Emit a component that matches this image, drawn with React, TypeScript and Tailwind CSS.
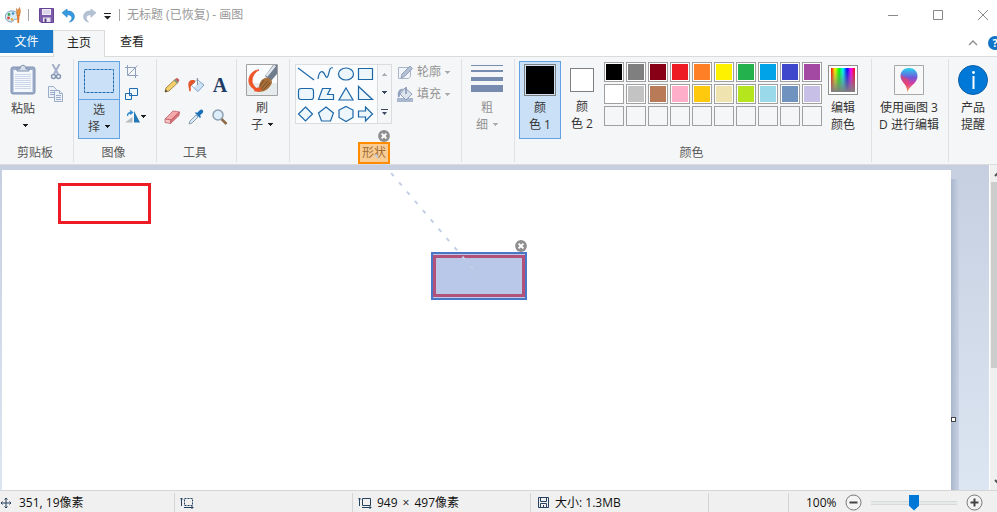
import React from "react";

const ROW_ONE = ["bg-[#000000]", "bg-[#7f7f7f]", "bg-[#880015]", "bg-[#ed1c24]", "bg-[#ff7f27]", "bg-[#fff200]", "bg-[#22b14c]", "bg-[#00a2e8]", "bg-[#3f48cc]", "bg-[#a349a4]"];
const ROW_TWO = ["bg-[#ffffff]", "bg-[#c3c3c3]", "bg-[#b97a57]", "bg-[#ffaec9]", "bg-[#ffc90e]", "bg-[#efe4b0]", "bg-[#b5e61d]", "bg-[#99d9ea]", "bg-[#7092be]", "bg-[#c8bfe7]"];
const ROW_THREE = Array.from({ length: 10 }, () => "");

function Caret({ className = "fill-[#1e1e1e]" }: { className?: string }) {
  return (
    <svg className={"shrink-0 " + className} width="5" height="3" viewBox="0 0 5 3" shapeRendering="crispEdges">
      <path d="M0 0h5v1H4v1H3v1H2V2H1V1H0z" />
    </svg>
  );
}

function Group({ label, width, last = false, highlight = false, children }: {
  label?: string; width: string; last?: boolean; highlight?: boolean; children: React.ReactNode;
}) {
  return (
    <section aria-label={label} className={"flex shrink-0 flex-col justify-between gap-[5px] " + width + (last ? "" : " border-r border-[#dfe1e5]")}>
      <div className="flex pt-[2px]">{children}</div>
      {label && (
        <div className="pr-[3px] text-center leading-[18px] text-[#5a5a5a]">
          {highlight ? (
            <span className="relative inline-block">
              {label}
              <span className="absolute -inset-x-1 -inset-y-[2px] border-2 border-[#ff8c00] bg-[#ff8c00]/40" />
            </span>
          ) : label}
        </div>
      )}
    </section>
  );
}

function Swatch({ color }: { color: string }) {
  return (
    <button aria-label="颜色" className={"size-5 border border-[#a0a0a0] p-px " + (color ? "bg-white" : "bg-[#f5f6f7]")}>
      <span className={"block size-full " + color} />
    </button>
  );
}

function TwoLine({ first, second, caret = "" }: { first: string; second: string; caret?: string }) {
  return (
    <span className="flex flex-col items-center pt-px leading-[17px]">
      <span>{first}</span>
      <span className="flex items-center gap-[5px]">{second}{caret && <Caret className={caret} />}</span>
    </span>
  );
}

function CloseBadge({ className }: { className: string }) {
  return (
    <button aria-label="删除标注" className={"absolute " + className}>
      <svg className="block" width="12" height="12" viewBox="0 0 12 12">
        <circle cx="6" cy="6" r="5.900" fill="#8f8f8f" />
        <path d="M3.600 3.600l4.800 4.800M8.400 3.600L3.600 8.400" stroke="#fff" strokeWidth="2" />
      </svg>
    </button>
  );
}

function TitleBar() {
  return (
    <header className="flex h-[30px] shrink-0 items-center text-[#999]">
      <svg className="ml-[5px]" width="16" height="17" viewBox="0 0 16 17">
        <path d="M8 4C3.500 3.500.5 6 .5 9.500S3 15 6.500 15c2 0 1.500-2 3-2.500 1.500-.5 3 .5 3.500-1.500C14 7 11.500 4.300 8 4z" fill="#d8eaf6" stroke="#6f9fc0" />
        <circle cx="4" cy="7.500" r="1.400" fill="#3fa354" /><circle cx="8" cy="6.500" r="1.300" fill="#3b8fd0" />
        <circle cx="3.500" cy="11" r="1.400" fill="#d94a38" /><circle cx="7" cy="12.500" r="1.300" fill="#e8a32a" />
        <path d="M12 8l.5 8h1.500l.5-8z" fill="#e87524" /><path d="M11.500 1.500l1.500 2 1.500-3 1 3.500-.8 4.500h-2.800z" fill="#e9953c" stroke="#b9642b" strokeWidth=".5" />
      </svg>
      <span className="ml-[7px] h-3 w-px bg-[#a5a5a5]" />
      <button aria-label="保存" className="ml-[10px]">
        <svg className="block" width="15" height="15" viewBox="0 0 15 15">
          <path d="M.5.5h14v14H2L.5 13z" fill="#7c5bab" stroke="#644594" />
          <path d="M3 1h9v6H3z" fill="#f0ebf7" /><path d="M4 3h7M4 5h7" stroke="#c9bedb" />
          <path d="M4 9.500h7.500V14H4z" fill="#e8e3ee" /><path d="M5.500 10.500h2V14h-2z" fill="#5a4380" />
        </svg>
      </button>
      <button aria-label="撤消" className="ml-2">
        <svg className="block" width="13" height="15" viewBox="0 0 14 15">
          <path d="M0 4.500L5.500.500v2.300C10 2.500 13.500 4.500 13.300 9c-.1 3-2.300 5-5.300 5.500 2-1.500 3-3 2.500-5C10 7.500 8 6.500 5.500 6.700V9.500z" fill="#369be0" stroke="#1978bd" strokeWidth=".6" />
        </svg>
      </button>
      <button aria-label="重做" className="ml-2">
        <svg className="block" width="13" height="15" viewBox="0 0 14 15">
          <path d="M14 4.500L8.500.500v2.300C4 2.500.5 4.500.7 9c.1 3 2.300 5 5.300 5.500-2-1.500-3-3-2.500-5C4 7.500 6 6.500 8.500 6.700V9.500z" fill="#b5c2d4" stroke="#9caec4" strokeWidth=".6" />
        </svg>
      </button>
      <button aria-label="自定义快速访问工具栏" className="ml-2">
        <svg className="mt-[2px] block" width="7" height="7" viewBox="0 0 7 7"><path d="M0 0h7v1H0zM0 3h7L3.500 6.500z" fill="#222" /></svg>
      </button>
      <span className="ml-2 h-3 w-px bg-[#a5a5a5]" />
      <h1 className="ml-[7px]">无标题 (已恢复) - 画图</h1>
      <div className="ml-auto flex items-center gap-[35px] pr-[9px]">
        <button aria-label="最小化"><svg className="block" width="10" height="10"><path d="M0 5.500h10" stroke="#888" /></svg></button>
        <button aria-label="最大化"><svg className="block" width="10" height="10"><path d="M.5.5h9v9h-9z" fill="none" stroke="#888" /></svg></button>
        <button aria-label="关闭"><svg className="block" width="10" height="10"><path d="M0 0l10 10M10 0L0 10" stroke="#888" /></svg></button>
      </div>
    </header>
  );
}

function Tabs() {
  return (
    <nav className="flex h-[26px] shrink-0 overflow-x-clip text-[#222]">
      <button className="h-[23px] w-[53px] bg-[#1979ca] text-white">文件</button>
      <button className="relative z-10 h-[27px] w-[52px] border border-b-0 border-[#dadbdc] bg-[#f5f6f7] pb-[2px]">主页</button>
      <button className="h-6 w-[54px]">查看</button>
      <div className="ml-auto flex items-center gap-[10px]">
        <button aria-label="最小化功能区"><svg className="block" width="10" height="6"><path d="M1 5l4-4 4 4" fill="none" stroke="#8e8e8e" strokeWidth="1.300" /></svg></button>
        <button aria-label="帮助" className="-mr-[5px] size-[14px] rounded-full bg-[#0f73c8] text-center text-[11px] leading-[14px] font-bold text-white">?</button>
      </div>
    </nav>
  );
}

function Clipboard() {
  return (
    <Group label="剪贴板" width="w-[74px]">
      <button className="flex w-[46px] flex-col items-center gap-[5px] pt-[3px] text-[#444]">
        <svg width="26" height="31" viewBox="0 0 26 31">
          <rect x="1" y="3" width="24" height="27" rx="2" fill="#9bacc9" stroke="#8193b4" />
          <path d="M3.500 6h19v22h-19z" fill="#f4f7fc" />
          <path d="M5 10.500h16M5 12.500h16M5 14.500h16M5 16.500h16M5 18.500h16M5 20.500h16M5 22.500h16M5 24.500h16" stroke="#cbd7e8" />
          <path d="M7 7V5h3c0-5 6-5 6 0h3v2z" fill="#d6deea" stroke="#7d90ae" />
        </svg>
        <span className="flex flex-col items-center gap-[6px] leading-[18px]">粘贴<span className="pl-[5px]"><Caret className="block fill-[#1e1e1e]" /></span></span>
      </button>
      <div className="flex flex-col items-center gap-[6px] pt-[3px] pl-px">
        <button aria-label="剪切">
          <svg className="block" width="18" height="16" viewBox="0 0 18 16" fill="none">
            <path d="M5.500 0l5.500 10M12.500 0L7 10" stroke="#a3b2ca" strokeWidth="2" />
            <circle cx="6.500" cy="12.500" r="2" stroke="#8495b3" strokeWidth="1.400" /><circle cx="11.500" cy="12.500" r="2" stroke="#8495b3" strokeWidth="1.400" />
          </svg>
        </button>
        <button aria-label="复制">
          <svg className="block" width="16" height="16" viewBox="0 0 16 16" stroke="#9badc8" fill="#eef2f8">
            <path d="M.5.5h5l3 3v8h-8z" /><path d="M2 4.500h4M2 6.500h4M2 8.500h4" />
            <path d="M6.500 4.500h5l3 3v8h-8z" /><path d="M11.500 4.500v3h3M8 9.500h5M8 11.500h5M8 13.500h5" />
          </svg>
        </button>
      </div>
    </Group>
  );
}

function ImageGroup() {
  return (
    <Group label="图像" width="w-[83px]">
      <button className="ml-1 flex h-[78px] w-[42px] flex-col border border-[#62a2e4] bg-[#c9e0f7]">
        <span className="flex h-[38px] w-full items-center justify-center border-b border-[#62a2e4]">
          <svg width="30" height="24"><rect x=".5" y=".5" width="29" height="23" fill="none" stroke="#1d6bb0" strokeDasharray="3 1" /></svg>
        </span>
        <span className="w-full text-[#444]"><TwoLine first="选" second="择" caret="fill-[#1e1e1e]" /></span>
      </button>
      <div className="flex flex-col gap-[10px] pt-[4px] pl-[5px]">
        <button aria-label="裁剪">
          <svg className="block" width="13" height="13" viewBox="0 0 13 13" fill="none" stroke="#8fa1bd">
            <path d="M2.500 0v10.500H13M0 2.500h10.500V13M3 10l9.500-9.500" />
          </svg>
        </button>
        <button aria-label="重新调整大小">
          <svg className="block" width="13" height="12" viewBox="0 0 13 12" fill="#eff6fc" stroke="#1d6bb0"><path d="M.5 5.500h6v6h-6zM4.500.5h8v7h-8z" /></svg>
        </button>
        <button aria-label="旋转" className="flex items-center gap-px">
          <svg className="block" width="15" height="13" viewBox="0 0 15 13">
            <path d="M0 12.500h7.500V7z" fill="#b8bcc2" /><path d="M9 1v11.500h6z" fill="#2277b5" />
            <path d="M2.500 6c0-3 2-3.500 4-3.500M5 .5l2.500 2L5 4.500" fill="none" stroke="#2d8ad0" strokeWidth="1.300" />
          </svg>
          <Caret />
        </button>
      </div>
    </Group>
  );
}

function Tools() {
  return (
    <Group label="工具" width="w-[80px]">
      <div className="grid grid-cols-[16px_16px_16px] gap-x-2 gap-y-4 pt-4 pl-[7px]">
        <button aria-label="铅笔">
          <svg className="block" width="16" height="16" viewBox="0 0 16 16">
            <path d="M1 15l1-4L11.500 2l3 3L5 14z" fill="#f4d16a" stroke="#8e7131" strokeWidth=".8" />
            <path d="M11 2.500L13 .8 15.500 3 14 5.200z" fill="#c95d61" /><path d="M9.700 3.500l1.500-1.300 3 3-1.300 1.400z" fill="#7d9b85" /><path d="M1 15l.7-2.500 1.800 1.700z" fill="#333" />
          </svg>
        </button>
        <button aria-label="用颜色填充">
          <svg className="block" width="17" height="16" viewBox="0 0 17 16">
            <path d="M9 2.500l7 5.500-6 6.500-6.500-6z" fill="#cfe3f5" stroke="#5f93c4" strokeWidth=".8" /><path d="M9 3l2.500 2-5.500 5.500L4 8.500z" fill="#fff" />
            <path d="M7 3.500C3 2 0 4 .3 8l1 6c1 1 1.700 0 1.500-2-.3-3 .5-4.500 4.200-6.500z" fill="#e5572b" /><path d="M9.500 8V1" stroke="#8793a0" strokeWidth="1.200" />
          </svg>
        </button>
        <button aria-label="文本" className="text-center font-['Liberation_Serif',serif] text-[20px] leading-4 font-bold text-[#1f3c66]">A</button>
        <button aria-label="橡皮擦">
          <svg className="block" width="16" height="16" viewBox="0 0 16 16" stroke="#b55560" strokeWidth=".7">
            <path d="M1 10L9 2l6.500 1L7 11z" fill="#f5a9aa" /><path d="M1 10l6 1-.5 3.500-5.500-1z" fill="#f8c3c3" /><path d="M7 11l8.500-8-.5 3.500-8.500 8z" fill="#df7479" />
          </svg>
        </button>
        <button aria-label="颜色选取器">
          <svg className="block" width="16" height="16" viewBox="0 0 16 16">
            <path d="M1 15l1-3 6-6 2 2-6 6z" fill="#dceaf5" stroke="#6e8ba6" strokeWidth=".8" />
            <path d="M7 4l5 5 1-1-1-1.500 3-3c1-2-1.500-4-3-2.500l-3 3L8 3z" fill="#1d70b7" />
          </svg>
        </button>
        <button aria-label="放大镜">
          <svg className="block" width="16" height="16" viewBox="0 0 16 16">
            <path d="M9.500 10l5 5" stroke="#8d6a4a" strokeWidth="2.500" /><circle cx="6" cy="6" r="5" fill="#dcedfb" stroke="#8d9fb0" strokeWidth="1.500" />
          </svg>
        </button>
      </div>
    </Group>
  );
}

function Brush() {
  return (
    <Group width="w-[53px]">
      <button className="ml-[5px] flex w-[40px] flex-col items-center gap-[2px] pt-[3px] text-[#444]">
        <svg width="32" height="32" viewBox="0 0 32 32">
          <path d="M.5.5h31v31H.5z" fill="#fbfcfd" stroke="#a2a2a2" />
          <path d="M1 19h30v12H1z" fill="#e6ebee" />
          <path d="M13 6C7 6 2 12 3 18c1 5 5 8 10 9-3-3-7-6-7-10 0-5 3-9 7-11z" fill="#ee5529" stroke="#ee5529" strokeLinejoin="round" />
          <path d="M31 1v9l-6 7-6-5 8-11z" fill="#6f7c8d" /><path d="M29 1.500L20.500 12" stroke="#dfe5eb" strokeWidth="2.500" />
          <path d="M19 14c4-1 7 1 7 5-3 6-7 9-14 9 1-5 1-12 7-14z" fill="#a7703b" /><path d="M14 26l8-9M17 26l7-7M14 22l4-6" stroke="#6d4521" strokeWidth=".8" />
          <path d="M8 27c1-4 4-4 7-3 1 3-3 5-7 3z" fill="#ef5427" />
        </svg>
        <TwoLine first="刷" second="子" caret="fill-[#1e1e1e]" />
      </button>
    </Group>
  );
}

const SHAPES: { name: string; d: string }[] = [
  { name: "直线", d: "M2 4l16 12" },
  { name: "曲线", d: "M2 15c1-9 5-9 7-4 3 7 4-4 5-6 1-2 3-1 3-1" },
  { name: "椭圆形", d: "M2.500 10a7.500 6 0 1 0 15 0a7.500 6 0 1 0-15 0" },
  { name: "矩形", d: "M2.500 4.500h14v11h-14z" },
  { name: "圆角矩形", d: "M5 4.500h10q2.500 0 2.500 2.500v6q0 2.500-2.500 2.500H5q-2.500 0-2.500-2.500V7q0-2.500 2.500-2.500z" },
  { name: "多边形", d: "M6.500 4.500h8l-3 6h6v5h-15z" },
  { name: "三角形", d: "M10 4l7 12H3z" },
  { name: "直角三角形", d: "M2.500 2.500v13h14z" },
  { name: "菱形", d: "M9.500 3l7 7-7 7-7-7z" },
  { name: "五边形", d: "M10 3l7.500 6-3 8h-9l-3-8z" },
  { name: "六边形", d: "M10 2.500l7 3.500v7.500L10 17.500l-7-4V6z" },
  { name: "右箭头", d: "M2.500 7h7V3l7 7-7 7v-4h-7z" },
];

function Shapes() {
  return (
    <Group label="形状" width="w-[172px]" highlight>
      <div className="mt-[3px] ml-[5px] flex h-[60px] w-[97px] shrink-0 border border-[#dadcdf] bg-[#fafcfe]">
        <div className="-mt-px grid grid-cols-[20px_20px_20px_20px] grid-rows-[20px_20px_20px]">
          {SHAPES.map((s) => (
            <button key={s.name} aria-label={s.name}>
              <svg className="block" width="20" height="20" viewBox="0 0 20 20"><path d={s.d} fill="#edf6fb" stroke="#1c67a8" strokeWidth="1.200" /></svg>
            </button>
          ))}
        </div>
        <div className="ml-auto flex w-[14px] flex-col items-center justify-around border-l border-[#dadcdf] bg-[#f5f6f7]">
          <button aria-label="向上滚动"><Caret className="rotate-180 fill-[#a9afb8]" /></button>
          <button aria-label="向下滚动"><Caret className="fill-[#3b4a60]" /></button>
          <button aria-label="更多形状"><svg className="block" width="7" height="6"><path d="M0 0h7v1H0zM1 3h5L3.500 6z" fill="#3b4a60" /></svg></button>
        </div>
      </div>
      <div className="flex flex-col gap-1 pt-[2px] pl-[5px] text-[#939393]">
        <button className="flex items-center gap-1 leading-[18px]">
          <svg width="16" height="16" viewBox="0 0 16 16">
            <path d="M1.500 3.500h12v9l-2 2h-10z" fill="#f1f4f8" stroke="#a9b6ca" /><path d="M4 14l1-4 8-8 2.500 2.500-8 8z" fill="#b3bfd2" stroke="#8496b4" strokeWidth=".8" />
          </svg>
          轮廓<Caret className="fill-[#acacac]" />
        </button>
        <button className="flex items-center gap-1 leading-[18px]">
          <svg width="16" height="16" viewBox="0 0 16 16">
            <path d="M0 12h16v4H0z" fill="#a9b8cf" /><path d="M8 2l7 6-6 6-6-6z" fill="#dde4ee" stroke="#8c9db9" />
            <path d="M7 3C3 2 0 5 1 11c1 1 2 0 2-2 0-3 1-4 4-6z" fill="#8fa1bf" /><path d="M9 8V1" stroke="#8193b3" strokeWidth="1.500" />
          </svg>
          填充<Caret className="fill-[#acacac]" />
        </button>
      </div>
    </Group>
  );
}

function LineWidth() {
  return (
    <Group width="w-[53px]">
      <button className="ml-1 flex w-[42px] flex-col items-center gap-[6px] pt-[3px] text-[#939393]">
        <svg width="32" height="28" viewBox="0 0 32 28"><path d="M0 1h32v1H0zM0 6h32v2H0zM0 13h32v4H0zM0 21h32v7H0z" fill="#788cb0" /></svg>
        <TwoLine first="粗" second="细" caret="fill-[#acacac]" />
      </button>
    </Group>
  );
}

function Colors() {
  return (
    <Group label="颜色" width="w-[357px]">
      <button className="ml-1 flex h-[78px] w-[42px] flex-col items-center gap-[2px] border border-[#62a2e4] bg-[#c9e0f7] pt-[2px] text-[#333]">
        <span className="size-8 border border-[#7f7f7f] bg-[#c9e0f7] p-px"><span className="block size-full bg-black" /></span>
        <TwoLine first="颜" second="色 1" />
      </button>
      <button className="mr-px flex h-[78px] w-[42px] flex-col items-center gap-[5px] pt-[7px] text-[#333]">
        <span className="size-6 border border-[#7f7f7f] bg-white" />
        <TwoLine first="颜" second="色 2" />
      </button>
      <div className="mt-px grid grid-cols-[repeat(10,20px)] gap-[2px] self-start">
        {[...ROW_ONE, ...ROW_TWO, ...ROW_THREE].map((c, i) => <Swatch key={i} color={c} />)}
      </div>
      <button className="flex w-[42px] flex-col items-center gap-[3px] pt-1 text-[#333]">
        <span className="size-[30px] border border-[#8f8f8f] bg-white p-[2px]">
          <span className="block size-full bg-[linear-gradient(to_bottom,transparent,#808080),linear-gradient(to_right,#f00,#ff0,#0f0,#0ff,#00f,#f0f,#f00)]" />
        </span>
        <TwoLine first="编辑" second="颜色" />
      </button>
    </Group>
  );
}

function Ribbon() {
  return (
    <div className="flex shrink-0 overflow-x-clip border-y border-[#dadbdc] bg-[#f5f6f7] py-[2px]">
      <Clipboard />
      <ImageGroup />
      <Tools />
      <Brush />
      <Shapes />
      <LineWidth />
      <Colors />
      <Group width="w-[77px]">
        <button className="flex w-[74px] flex-col items-center gap-[3px] pt-1 text-[#333]">
          <svg width="30" height="30" viewBox="0 0 30 30">
            <defs>
              <linearGradient id="drop" x1="0" y1="0" x2="0" y2="1"><stop offset="0" stopColor="#26d3f2" /><stop offset=".4" stopColor="#7257d9" /><stop offset=".65" stopColor="#d93c9e" /><stop offset="1" stopColor="#f6a03a" /></linearGradient>
            </defs>
            <path d="M.5.5h29v29H.5z" fill="#f8f8f8" stroke="#a8a8a8" />
            <path d="M15 3c5 0 8.500 3.500 8.500 8 0 7-6 8-10.500 16 0-4 0-5-2-7.500C8 16 6.500 14 6.500 11 6.500 6.500 10 3 15 3z" fill="url(#drop)" />
            <path d="M7 9c2 4 6 2 8 6 1 3-2 6-2 9-1-5-6-7-6-13z" fill="#f0445f" opacity=".6" />
          </svg>
          <TwoLine first="使用画图 3" second="D 进行编辑" />
        </button>
      </Group>
      <Group width="w-[48px]" last>
        <button className="flex w-full flex-col items-center gap-[3px] pt-1 text-[#333]">
          <svg width="30" height="30" viewBox="0 0 30 30">
            <circle cx="15" cy="15" r="14.500" fill="#0078d7" stroke="#0a5ea6" /><path d="M15.500 11v13" stroke="#fff" strokeWidth="2" /><circle cx="15.500" cy="7.500" r="1.400" fill="#fff" />
          </svg>
          <TwoLine first="产品" second="提醒" />
        </button>
      </Group>
    </div>
  );
}

function Workspace() {
  return (
    <main className="flex min-h-0 flex-1 bg-linear-to-b from-[#c5cfe0] to-[#dce6f2]">
      <div className="relative mt-[5px] ml-[2px] flex-1 bg-white">
        <div className="absolute top-[13px] left-14 h-[41px] w-[93px] border-3 border-[#ed1c24]" />
        <div className="absolute top-[82px] left-[429px] h-12 w-24 border-2 border-[#4b75c5] bg-[#b9c7e8] py-px">
          <div className="size-full border-3 border-[#b2527a]" />
        </div>
        <span className="absolute top-[247px] left-full size-[5px] border border-[#444] bg-white" />
      </div>
      <div className="mt-[14px] w-2 bg-linear-to-r from-[#a9b6cc] to-[#c7d2e4]" />
      <div className="w-[30px]" />
      <div className="flex w-2 flex-col overflow-hidden border-l border-white bg-[#f0f0f0]">
        <button aria-label="向上滚动" className="flex h-[17px] shrink-0 items-center pl-1"><svg className="shrink-0" width="9" height="6"><path d="M1 5l3.500-3.500L8 5" fill="none" stroke="#555" strokeWidth="2" /></svg></button>
        <div className="ml-px h-[186px] bg-[#cdcdcd]" />
        <button aria-label="向下滚动" className="mt-auto flex h-[17px] shrink-0 items-center pl-1"><svg className="shrink-0" width="9" height="6"><path d="M1 1l3.500 3.500L8 1" fill="none" stroke="#555" strokeWidth="2" /></svg></button>
      </div>
    </main>
  );
}

function StatusBar() {
  return (
    <footer className="flex h-[22px] shrink-0 border-t border-[#d5d5d5] bg-[#f0f0f0] pt-[2px] text-[#111]">
      <div className="flex w-[175px] items-center gap-[7px] border-r border-[#d5d5d5]">
        <svg width="12" height="12" viewBox="0 0 12 12" fill="none" stroke="#26425f"><path d="M6 1v10M1 6h10M4.500 2.500L6 1l1.500 1.500M4.500 9.500L6 11l1.500-1.500M2.500 4.500L1 6l1.500 1.500M9.500 4.500L11 6 9.500 7.500" /></svg>
        <span className="pt-px">351, 19像素</span>
      </div>
      <div className="flex w-[178px] items-center border-r border-[#d5d5d5] pl-[5px]">
        <svg width="14" height="12" viewBox="0 0 14 12" fill="none" stroke="#26425f"><path d="M4.500 1.500h8v7h-8z" strokeDasharray="2 1" /><path d="M1.500 1v8M0 2.500L1.500 1 3 2.500M4 10.500h9M11.500 9l1.500 1.500-1.500 1.500" /></svg>
      </div>
      <div className="flex w-[178px] items-center gap-[5px] border-r border-[#d5d5d5] pl-[5px]">
        <svg width="14" height="12" viewBox="0 0 14 12" fill="none" stroke="#26425f"><path d="M4.500 1.500h8v7h-8z" /><path d="M1.500 1v8M0 2.500L1.500 1 3 2.500M4 10.500h9M11.500 9l1.500 1.500-1.500 1.500" /></svg>
        <span className="flex gap-[5px] pt-px"><span>949</span><span>×</span><span>497像素</span></span>
      </div>
      <div className="flex w-[178px] items-center gap-[6px] border-r border-[#d5d5d5] pl-[7px]">
        <svg width="11" height="11" viewBox="0 0 11 11" fill="none" stroke="#26425f"><path d="M.5.5h10v10h-10zM2.500.5v4h6v-4M2.500 10.500v-4h6v4M5.500 8v2" /></svg>
        <span className="pt-px">大小: 1.3MB</span>
      </div>
      <div className="flex-1 border-r border-[#d5d5d5]" />
      <div className="flex w-[208px] items-center pl-[17px]">
        <label htmlFor="zoom" className="w-[39px] pt-px">100%</label>
        <button aria-label="缩小">
          <svg className="block" width="17" height="17"><circle cx="8.500" cy="8.500" r="7.500" fill="#f4f4f4" stroke="#777" /><path d="M4.500 8.500h8" stroke="#444" strokeWidth="2" /></svg>
        </button>
        <input id="zoom" type="range" min="0" max="100" defaultValue="50"
          className="mx-[9px] h-4 w-[86px] appearance-none bg-[linear-gradient(#d6dad9_1px,#e7eaea_1px_3px,#d6dad9_3px)] bg-[length:100%_4px] bg-center bg-no-repeat [&::-webkit-slider-thumb]:h-4 [&::-webkit-slider-thumb]:w-[10px] [&::-webkit-slider-thumb]:appearance-none [&::-webkit-slider-thumb]:bg-[#0078d7] [&::-webkit-slider-thumb]:[clip-path:polygon(0_0,100%_0,100%_70%,50%_100%,0_70%)]" />
        <button aria-label="放大">
          <svg className="block" width="17" height="17"><circle cx="8.500" cy="8.500" r="7.500" fill="#f4f4f4" stroke="#777" /><path d="M4.500 8.500h8M8.500 4.500v8" stroke="#444" strokeWidth="2" /></svg>
        </button>
      </div>
    </footer>
  );
}

export default function App() {
  return (
    <div className="relative flex h-screen flex-col overflow-hidden bg-white font-['Open_Sans','Noto_Sans_CJK_SC',sans-serif] text-xs">
      <TitleBar />
      <Tabs />
      <Ribbon />
      <Workspace />
      <StatusBar />
      <svg className="pointer-events-none absolute top-[153px] left-[374px] z-20" width="106" height="124" viewBox="0 0 106 124">
        <path d="M0 0l105 123" stroke="#c3cfe4" strokeWidth="2" strokeDasharray="4 8.200" strokeDashoffset="-2" />
      </svg>
      <CloseBadge className="top-[130px] left-[378px]" />
      <CloseBadge className="top-[240px] left-[515px]" />
    </div>
  );
}
